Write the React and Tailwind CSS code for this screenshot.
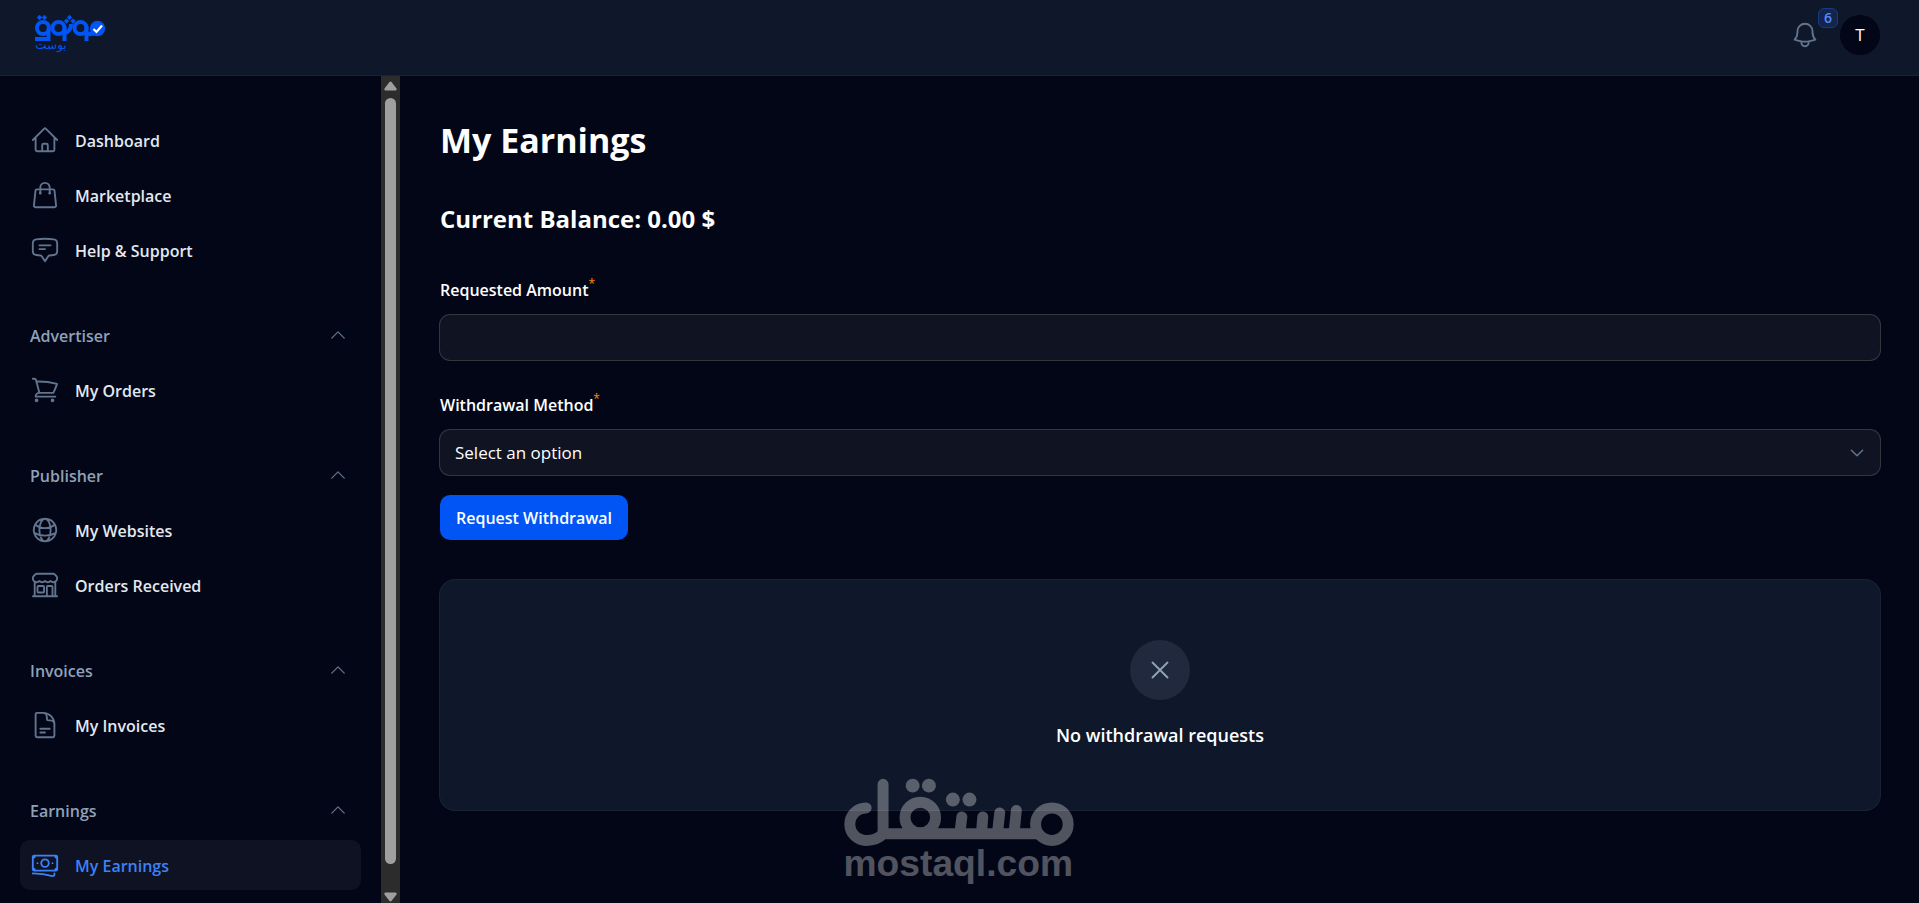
import { useState } from "react";
import {
  HiOutlineHome,
  HiOutlineShoppingBag,
  HiOutlineChatBubbleBottomCenterText,
  HiOutlineShoppingCart,
  HiOutlineGlobeAlt,
  HiOutlineBuildingStorefront,
  HiOutlineDocumentText,
  HiOutlineBanknotes,
  HiOutlineBell,
  HiOutlineChevronUp,
  HiOutlineXMark,
} from "react-icons/hi2";

const groups = [
  {
    items: [
      { label: "Dashboard", icon: HiOutlineHome },
      { label: "Marketplace", icon: HiOutlineShoppingBag },
      { label: "Help & Support", icon: HiOutlineChatBubbleBottomCenterText },
    ],
  },
  { title: "Advertiser", items: [{ label: "My Orders", icon: HiOutlineShoppingCart }] },
  {
    title: "Publisher",
    items: [
      { label: "My Websites", icon: HiOutlineGlobeAlt },
      { label: "Orders Received", icon: HiOutlineBuildingStorefront },
    ],
  },
  { title: "Invoices", items: [{ label: "My Invoices", icon: HiOutlineDocumentText }] },
  { title: "Earnings", items: [{ label: "My Earnings", icon: HiOutlineBanknotes, active: true }] },
];

function Logo() {
  return (
    <svg viewBox="30 10 80 50" className="h-[50px] w-20" role="img" aria-label="بوست">
      <g fill="none" stroke="#0055f4" strokeWidth="4">
        <circle cx="43" cy="28" r="6" />
        <path d="M48.5 28V39H35" />
        <circle cx="58.5" cy="28" r="6" />
        <path d="M64.5 26V41M64.5 33C69 32 71 29 71 24" />
        <circle cx="80.5" cy="28" r="6" />
        <path d="M86.5 26V41M86 33.500C89 34 92 34 95 33.500" />
      </g>
      <g fill="#0055f4">
        <path d="M39.500 14.800l2.700 2.700-2.700 2.700-2.700-2.700zM44.500 14.800l2.700 2.700-2.700 2.700-2.700-2.700zM69.500 14.800l2.600 2.600-2.600 2.600-2.600-2.600zM66.500 18.500l2.600 2.600-2.600 2.600-2.600-2.600zM73 18.500l2.600 2.600-2.600 2.600-2.600-2.600z" />
        <circle cx="97.5" cy="28.500" r="7.700" />
        <text x="51" y="49" textAnchor="middle" fontSize="12" fontFamily="DejaVu Sans, sans-serif">بوست</text>
      </g>
      <path d="M93.500 29l3 3 5.500-6.500" fill="none" stroke="#fff" strokeWidth="2.200" />
    </svg>
  );
}

function Watermark() {
  return (
    <svg
      viewBox="70 475 695 325"
      className="pointer-events-none absolute left-[843px] top-[778px] h-[108px] w-[232px]"
      aria-hidden="true"
    >
      <g opacity="0.31" fill="#fff">
        <g fill="none" stroke="#fff" strokeWidth="33" strokeLinecap="round" strokeLinejoin="round">
          <circle cx="697" cy="614" r="49" />
          <circle cx="301" cy="594" r="46" />
          <path d="M189 494V643H650M590 573L583 643M540 580L533 643M489 592L485 643M426 592L420 643" />
          <path d="M138 565A49 49 0 0 0 138 663C160 663 178 656 189 643" />
        </g>
        <circle cx="278" cy="498" r="21" />
        <circle cx="327" cy="498" r="21" />
        <circle cx="399" cy="540" r="21" />
        <circle cx="449" cy="540" r="21" />
        <text x="70" y="770" fontSize="112" fontWeight="700" fontFamily="Liberation Sans, sans-serif">mostaql.com</text>
      </g>
    </svg>
  );
}

function Group({ title, items }) {
  const [open, setOpen] = useState(true);
  return (
    <section className="flex flex-col gap-[5px]">
      {title && (
        <button
          type="button"
          aria-expanded={open}
          onClick={() => setOpen(!open)}
          className="flex h-[50px] items-center justify-between pl-2.5 pr-[13px] text-left font-semibold text-slate-400"
        >
          <span className="pt-0.5">{title}</span>
          <HiOutlineChevronUp className={open ? "size-5 text-slate-500" : "size-5 rotate-180 text-slate-500"} />
        </button>
      )}
      {open && (
        <ul className="flex flex-col gap-[5px]">
          {items.map(({ label, icon: Icon, active }) => (
            <li key={label}>
              <a
                href="#"
                aria-current={active ? "page" : undefined}
                className={
                  active
                    ? "flex h-[50px] items-center gap-[15px] rounded-[10px] bg-white/5 px-2.5 font-semibold text-[#3b82f6]"
                    : "flex h-[50px] items-center gap-[15px] rounded-[10px] px-2.5 font-semibold text-slate-200"
                }
              >
                <Icon className={active ? "size-[30px]" : "size-[30px] text-slate-500"} />
                <span className="pt-0.5">{label}</span>
              </a>
            </li>
          ))}
        </ul>
      )}
    </section>
  );
}

function Scrollbar() {
  return (
    <div className="flex w-[19px] shrink-0 flex-col items-center justify-between bg-[#2c2c2c] pb-px pt-[5px]" aria-hidden="true">
      <svg viewBox="0 0 13 10" className="h-2.5 w-[13px]" fill="#9f9f9f">
        <path d="M5.300 1.200Q6.500-.3 7.700 1.200L12.500 7.500Q13 9.500 11.500 9.500H1.500Q0 9.500.5 7.500z" />
      </svg>
      <div className="mb-7 mt-[7px] w-[11px] grow rounded-full bg-[#9f9f9f]" />
      <svg viewBox="0 0 13 10" className="h-2.5 w-[13px]" fill="#9f9f9f">
        <path d="M5.300 8.800Q6.500 10.300 7.700 8.800L12.500 2.500Q13 .5 11.500.5H1.500Q0 .5.5 2.500z" />
      </svg>
    </div>
  );
}

function FieldLabel({ htmlFor, children }) {
  return (
    <label htmlFor={htmlFor} className="flex h-[30px] items-center font-semibold">
      {children}
      <sup className="text-xs font-normal text-orange-400">*</sup>
    </label>
  );
}

export default function App() {
  return (
    <div className="relative flex h-screen flex-col overflow-hidden bg-[#020617] font-['Open_Sans',sans-serif] text-base text-white">
      <header className="flex h-[76px] shrink-0 items-center justify-between border-b border-[#1b2234] bg-[#0f172a] pb-[5px] pl-[30px] pr-[39px]">
        <a href="#">
          <Logo />
        </a>
        <div className="flex items-center gap-5">
          <button type="button" aria-label="Notifications" className="relative text-slate-500">
            <HiOutlineBell className="size-[30px]" />
            <span className="absolute -right-[18px] -top-3 flex size-5 items-center justify-center rounded-md border border-[#143b85] bg-[#15244a] text-sm font-semibold text-[#4d8dff]">
              6
            </span>
          </button>
          <button type="button" className="flex size-10 items-center justify-center rounded-full bg-[#020617] text-[17px]">
            T
          </button>
        </div>
      </header>

      <div className="flex min-h-0 grow">
        <aside className="flex w-[400px] shrink-0">
          <nav className="flex grow flex-col gap-[35px] overflow-hidden px-5 pt-[39px]">
            {groups.map((g, i) => (
              <Group key={i} {...g} />
            ))}
          </nav>
          <Scrollbar />
        </aside>

        <main className="flex min-w-0 grow flex-col overflow-hidden pl-10 pr-[39px] pt-10">
          <h1 className="text-[34px] leading-[48px] font-bold">My Earnings</h1>
          <h2 className="mt-[39px] text-2xl leading-8 font-bold">Current Balance: 0.00 $</h2>

          <form className="mt-10 flex flex-col items-start" onSubmit={(e) => e.preventDefault()}>
            <FieldLabel htmlFor="amount">Requested Amount</FieldLabel>
            <input
              id="amount"
              type="text"
              required
              className="mt-2.5 h-[45px] w-full rounded-[10px] bg-[#101322] px-[15px] ring-1 ring-[#34363f]"
            />
            <div className="mt-[30px]">
              <FieldLabel htmlFor="method">Withdrawal Method</FieldLabel>
            </div>
            <div className="relative mt-2.5 w-full">
              <select
                id="method"
                className="block h-[45px] w-full appearance-none rounded-[10px] bg-[#101322] pl-[15px] pr-12 text-[17px] ring-1 ring-[#34363f]"
              >
                <option>Select an option</option>
              </select>
              <HiOutlineChevronUp className="pointer-events-none absolute right-3.5 top-3.5 size-[18px] rotate-180 stroke-2 text-slate-500" />
            </div>
            <button type="submit" className="mt-5 h-[45px] rounded-[10px] bg-[#0055f4] px-4 font-semibold">
              Request Withdrawal
            </button>
          </form>

          <section className="mt-10 flex flex-col items-center rounded-[15px] bg-[#0f172a] px-8 py-[60px] ring-1 ring-[#1b2234]">
            <div className="flex size-[60px] items-center justify-center rounded-full bg-[#20293d]">
              <HiOutlineXMark className="size-[30px] text-slate-400" />
            </div>
            <h3 className="mt-5 text-lg leading-[30px] font-semibold">No withdrawal requests</h3>
          </section>
        </main>
      </div>
      <Watermark />
    </div>
  );
}
